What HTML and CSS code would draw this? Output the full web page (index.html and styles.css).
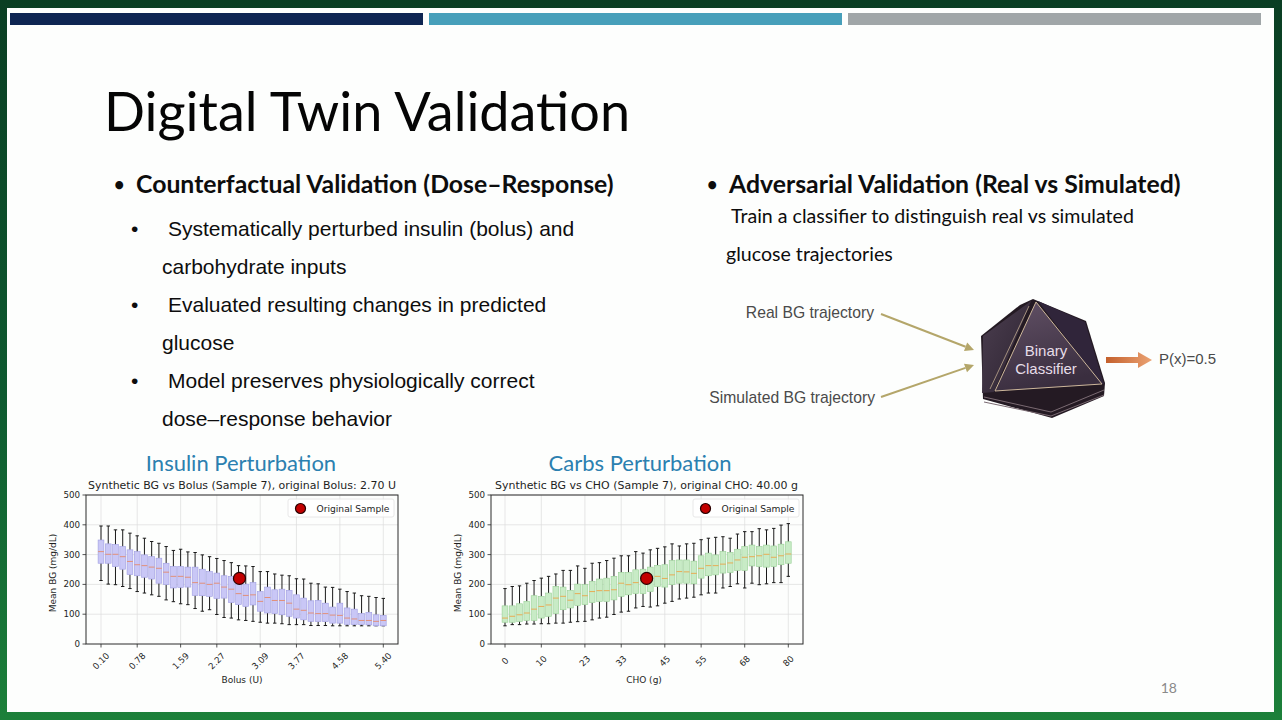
FILE: index.html
```html
<!DOCTYPE html>
<html lang="en">
<head>
<meta charset="utf-8">
<title>Digital Twin Validation</title>
<link rel="stylesheet" href="styles.css">
</head>
<body>
<div class="slide">
  <div class="topbars"><div class="bar navy"></div><div class="bar teal"></div><div class="bar gray"></div></div>
  <h1 class="title">Digital Twin Validation</h1>
  <div class="columns">
    <section class="col col-left">
      <div class="head"><span class="dot">•</span><span>Counterfactual Validation (Dose–Response)</span></div>
      <ul class="sub">
        <li><span class="sb">•</span><span class="st">Systematically perturbed insulin (bolus) and carbohydrate inputs</span></li>
        <li><span class="sb">•</span><span class="st">Evaluated resulting changes in predicted glucose</span></li>
        <li><span class="sb">•</span><span class="st">Model preserves physiologically correct dose–response behavior</span></li>
      </ul>
    </section>
    <section class="col col-right">
      <div class="head"><span class="dot">•</span><span>Adversarial Validation (Real vs Simulated)</span></div>
      <p class="desc">Train a classifier to distinguish real vs simulated<br>glucose trajectories</p>
      <svg class="diagram" width="560" height="135" viewBox="700 292 560 135">
        <defs>
          <linearGradient id="face" x1="0" y1="0" x2="0.3" y2="1">
            <stop offset="0" stop-color="#625166"/>
            <stop offset="1" stop-color="#3a2e3f"/>
          </linearGradient>
          <linearGradient id="side" x1="0" y1="0" x2="1" y2="1">
            <stop offset="0" stop-color="#4c3f50"/>
            <stop offset="1" stop-color="#2c2230"/>
          </linearGradient>
          <linearGradient id="orange" x1="0" y1="0" x2="1" y2="0">
            <stop offset="0" stop-color="#c4602c"/>
            <stop offset="1" stop-color="#eba373"/>
          </linearGradient>
        </defs>
        <text class="dlabel" x="874" y="318" text-anchor="end">Real BG trajectory</text>
        <text class="dlabel" x="875" y="403" text-anchor="end">Simulated BG trajectory</text>
        <line class="olive" x1="881" y1="314" x2="965.6" y2="346.8"/>
        <polygon class="olive-head" points="974,350 964,351 967.2,342.5"/>
        <line class="olive" x1="881" y1="397" x2="965.5" y2="367.9"/>
        <polygon class="olive-head" points="974,365 967,372.2 964,363.7"/>
        <polygon fill="#241a23" points="1033,299 1086,321 1105,383 1104,396 1052,418 983,399 981,336 1020,305"/>
        <polygon fill="url(#side)" points="1031,301 983,336 982,393 994,392"/>
        <polygon fill="#30253a" points="1038,301 1085,322 1104,384 1101,384"/>
        <polyline class="slab" points="984,397 1051,412 1104,390"/>
        <polyline class="slab" points="984,402 1051,416 1104,395"/>
        <line x1="1029" y1="306" x2="990" y2="389" stroke="#bfa98f" stroke-width="0.8"/>
        <polygon fill="url(#face)" stroke="#cdb79b" stroke-width="1" points="1036,302 1102,384 995,391"/>
        <text class="clabel" x="1046" y="356" text-anchor="middle">Binary</text>
        <text class="clabel" x="1046" y="374" text-anchor="middle">Classifier</text>
        <polygon fill="url(#orange)" points="1106,357 1138,357 1138,352 1152,360 1138,368 1138,363 1106,363"/>
        <text class="plabel" x="1159" y="364">P(x)=0.5</text>
      </svg>
    </section>
  </div>
  <div class="bottom">
    <figure class="chart">
      <h3 class="ctitle">Insulin Perturbation</h3>
      <svg class="plot" id="insulinChart" width="380" height="217" viewBox="40 475 380 217"></svg>
    </figure>
    <figure class="chart carbs">
      <h3 class="ctitle">Carbs Perturbation</h3>
      <svg class="plot" id="carbsChart" width="380" height="217" viewBox="445 475 380 217"></svg>
    </figure>
    <div class="pagenum">18</div>
  </div>
</div>
<script src="script.js"></script>
</body>
</html>
```

FILE: styles.css
```css
* { box-sizing: border-box; }
html, body { margin: 0; padding: 0; }
body {
  width: 1282px;
  height: 720px;
  overflow: hidden;
  background: linear-gradient(180deg, #0a3e23 0%, #0e5a30 55%, #1c803a 100%);
  font-family: "Lato", "Liberation Sans", sans-serif;
  color: #0d0d0d;
}
.slide {
  margin: 8px 0 0 7px;
  width: 1267px;
  height: 704px;
  background: #fdfefd;
  display: flex;
  flex-direction: column;
}
.topbars { display: flex; gap: 6px; margin: 5px 13px 0 3px; height: 12px; flex: none; }
.bar { flex: 1; }
.navy { background: #0e2552; }
.teal { background: #479fba; }
.gray { background: #a0a6a8; }
.title {
  margin: 56px 0 0 97px;
  height: 60px;
  font-size: 54px;
  line-height: 60px;
  font-weight: 400;
  color: #050505;
  flex: none;
}
.columns { display: flex; margin-top: 28px; height: 271px; padding-left: 110px; flex: none; }
.col-left { width: 593px; }
.col-right { flex: 1; }
.head { display: flex; align-items: center; font-weight: 700; font-size: 24.8px; line-height: 30px; white-space: nowrap; }
.head .dot { width: 22px; margin-left: -3px; font-size: 18px; }
.sub {
  list-style: none;
  margin: 11px 0 0;
  padding: 0 0 0 14px;
  font-family: "Liberation Sans", Arial, sans-serif;
  font-size: 21px;
  line-height: 38px;
}
.sub li { display: grid; grid-template-columns: 31px 425px; }
.sub .st { text-indent: 6px; }
.desc {
  margin: -2px 0 0;
  padding-left: 16px;
  text-indent: 5px;
  font-size: 19.6px;
  line-height: 38px;
}
.diagram { display: block; margin: 19px 0 0 -10px; }
.dlabel { font-family: "Liberation Sans", Arial, sans-serif; font-size: 15.7px; fill: #4a4a4a; }
.plabel { font-family: "Liberation Sans", Arial, sans-serif; font-size: 15px; fill: #4a4a4a; }
.clabel { font-family: "Liberation Sans", Arial, sans-serif; font-size: 15px; fill: #e6dde8; }
.olive { stroke: #b4a66a; stroke-width: 2; }
.olive-head { fill: #b4a66a; }
.slab { fill: none; stroke: #7a6a72; stroke-width: 1; }
.bottom { display: flex; flex: 1; margin-top: 11px; padding-left: 33px; }
.chart { margin: 0; width: 380px; display: flex; flex-direction: column; flex: none; }
.chart + .chart { margin-left: 25px; }
.ctitle {
  margin: 0;
  height: 24px;
  font-weight: 400;
  font-size: 22px;
  line-height: 24px;
  color: #2b80b0;
  text-align: center;
  padding-left: 22px;
}
.carbs .ctitle { padding-left: 10px; }
.plot { display: block; }
.plot text { font-family: "DejaVu Sans", "Liberation Sans", sans-serif; fill: #1e1e1e; }
.plot .grid { stroke: #dcdcdc; stroke-width: 0.7; }
.plot .wh { stroke: #1a1a1a; stroke-width: 1; }
.plot .spine { fill: none; stroke: #2a2a2a; stroke-width: 1; }
.plot .tick { stroke: #2a2a2a; stroke-width: 0.8; }
.plot .ylab { font-size: 8.7px; text-anchor: end; }
.plot .xlab { font-size: 8.7px; text-anchor: middle; dominant-baseline: central; }
.plot .axlab { font-size: 9px; text-anchor: middle; }
.plot .sub-t { font-size: 10px; text-anchor: middle; }
.plot .leg { font-size: 9px; }
.plot .legbox { fill: #ffffff; fill-opacity: 0.8; stroke: #e2e2e2; stroke-width: 0.8; }
.plot .orig { fill: #c20000; stroke: #2a0000; stroke-width: 1.2; }
.pagenum { margin: auto 97px 15px auto; font-size: 14px; line-height: 18px; color: #8a8a8a; }
```

FILE: script.js
```js
(function () {
  var NS = 'http://www.w3.org/2000/svg';
  function add(parent, tag, attrs, text) {
    var e = document.createElementNS(NS, tag);
    for (var k in attrs) e.setAttribute(k, attrs[k]);
    if (text != null) e.textContent = text;
    parent.appendChild(e);
    return e;
  }
  function chart(svg, c) {
    var L = c.L, R = c.R, T = 495, B = 644;
    var y = function (v) { return B - v * (B - T) / 500; };
    var n = c.data.length, dx = (c.x1 - c.x0) / (n - 1);
    var px = function (i) { return c.x0 + i * dx; };
    var v;
    for (v = 100; v <= 500; v += 100) add(svg, 'line', { x1: L, x2: R, y1: y(v), y2: y(v), 'class': 'grid' });
    c.ticks.forEach(function (t) { add(svg, 'line', { x1: px(t), x2: px(t), y1: T, y2: B, 'class': 'grid' }); });
    var hw = 2.9, cw = 1.7;
    c.data.forEach(function (d, i) {
      var x = px(i);
      add(svg, 'line', { x1: x, x2: x, y1: y(d[0]), y2: y(d[1]), 'class': 'wh' });
      add(svg, 'line', { x1: x, x2: x, y1: y(d[3]), y2: y(d[4]), 'class': 'wh' });
      add(svg, 'line', { x1: x - cw, x2: x + cw, y1: y(d[0]), y2: y(d[0]), 'class': 'wh' });
      add(svg, 'line', { x1: x - cw, x2: x + cw, y1: y(d[4]), y2: y(d[4]), 'class': 'wh' });
      add(svg, 'rect', { x: x - hw, y: y(d[3]), width: hw * 2, height: y(d[1]) - y(d[3]), fill: c.fill, stroke: c.edge, 'stroke-width': 0.6 });
      add(svg, 'line', { x1: x - hw, x2: x + hw, y1: y(d[2]), y2: y(d[2]), stroke: c.med, 'stroke-width': 0.9 });
    });
    add(svg, 'rect', { x: L, y: T, width: R - L, height: B - T, 'class': 'spine' });
    for (v = 0; v <= 500; v += 100) {
      add(svg, 'line', { x1: L - 3.5, x2: L, y1: y(v), y2: y(v), 'class': 'tick' });
      add(svg, 'text', { x: L - 6, y: y(v) + 3, 'class': 'ylab' }, String(v));
    }
    c.ticks.forEach(function (t, k) {
      var x = px(t);
      add(svg, 'line', { x1: x, x2: x, y1: B, y2: B + 3.5, 'class': 'tick' });
      add(svg, 'text', { x: x, y: 661, 'class': 'xlab', transform: 'rotate(-45 ' + x + ' 661)' }, c.labels[k]);
    });
    add(svg, 'text', { x: L - 33, y: 570, 'class': 'axlab', transform: 'rotate(-90 ' + (L - 30) + ' 570)' }, 'Mean BG (mg/dL)');
    add(svg, 'text', { x: c.xlabX, y: 683, 'class': 'axlab' }, c.xlabel);
    add(svg, 'text', { x: c.subX, y: 489, 'class': 'sub-t', textLength: c.subW, lengthAdjust: 'spacingAndGlyphs' }, c.sub);
    add(svg, 'rect', { x: c.legX, y: 499, width: 106, height: 18, rx: 2, 'class': 'legbox' });
    add(svg, 'circle', { cx: c.legX + 12.5, cy: 508.5, r: 5, 'class': 'orig' });
    add(svg, 'text', { x: c.legX + 28.5, y: 511.5, 'class': 'leg', textLength: 73, lengthAdjust: 'spacingAndGlyphs' }, 'Original Sample');
    add(svg, 'circle', { cx: px(c.dotIdx), cy: y(220), r: 6, 'class': 'orig' });
  }

  var insulin = [
    [213,271,310,349,396],[201,271,301,336,396],[199,260,301,334,383],[193,251,293,327,383],
    [186,233,277,316,372],[176,229,266,310,363],[171,224,263,299,355],[165,218,258,293,344],
    [160,204,254,288,338],[148,199,241,271,327],[142,188,227,260,314],[135,190,227,260,318],
    [132,191,224,258,309],[119,163,206,258,307],[110,162,204,251,299],[115,160,200,243,293],
    [99,153,204,238,287],[89,154,191,229,280],[87,139,184,227,273],[81,132,169,213,263],
    [79,126,163,201,262],[76,131,165,206,260],[73,110,143,176,243],[70,104,156,191,243],
    [70,102,146,182,235],[68,98,146,184,231],[65,93,137,180,229],[65,87,117,165,219],
    [65,81,113,154,218],[62,76,104,145,204],[62,75,102,146,202],[62,75,102,137,191],
    [61,70,97,124,190],[61,70,96,137,184],[61,66,87,121,176],[61,65,84,117,171],
    [61,65,79,102,162],[61,64,79,106,160],[61,61,76,98,156],[61,61,79,96,153]
  ];
  var carbs = [
    [61,73,87,128,186],[65,73,93,128,193],[65,76,98,135,195],[67,79,104,143,204],
    [67,79,117,162,213],[68,87,126,160,221],[68,93,131,171,227],[70,102,154,193,235],
    [70,115,160,191,247],[73,121,147,180,247],[75,129,169,201,262],[76,132,162,199,254],
    [81,139,176,210,271],[87,143,179,218,273],[90,143,179,221,280],[99,148,182,227,288],
    [107,160,204,240,296],[110,165,199,240,296],[121,169,206,249,310],[126,169,213,251,305],
    [124,176,221,258,316],[128,193,227,264,321],[137,191,220,266,326],[143,199,232,280,336],
    [151,204,243,282,329],[154,204,242,282,336],[157,202,237,278,338],[165,221,254,296,350],
    [171,229,263,305,355],[171,232,263,299,358],[188,238,268,310,360],[193,240,272,307,355],
    [202,247,282,318,369],[188,247,291,327,377],[204,262,293,332,377],[199,260,296,327,387],
    [202,258,301,332,383],[206,260,291,329,388],[206,266,296,335,399],[227,271,302,343,404]
  ];
  var ticks = [0, 5, 11, 16, 22, 27, 33, 39];

  chart(document.getElementById('insulinChart'), {
    L: 86, R: 398, x0: 101, x1: 383.3, data: insulin, ticks: ticks,
    labels: ['0.10', '0.78', '1.59', '2.27', '3.09', '3.77', '4.58', '5.40'],
    fill: '#c9c7f6', edge: '#9f9de2', med: '#e48a6c',
    xlabel: 'Bolus (U)', xlabX: 242,
    sub: 'Synthetic BG vs Bolus (Sample 7), original Bolus: 2.70 U', subX: 242, subW: 308,
    legX: 288, dotIdx: 19.13
  });
  chart(document.getElementById('carbsChart'), {
    L: 491, R: 803, x0: 505, x1: 788.3, data: carbs, ticks: ticks,
    labels: ['0', '10', '23', '33', '45', '55', '68', '80'],
    fill: '#c8ebc6', edge: '#98cf95', med: '#eba54a',
    xlabel: 'CHO (g)', xlabX: 644,
    sub: 'Synthetic BG vs CHO (Sample 7), original CHO: 40.00 g', subX: 646.5, subW: 303,
    legX: 693, dotIdx: 19.5
  });
})();
```
